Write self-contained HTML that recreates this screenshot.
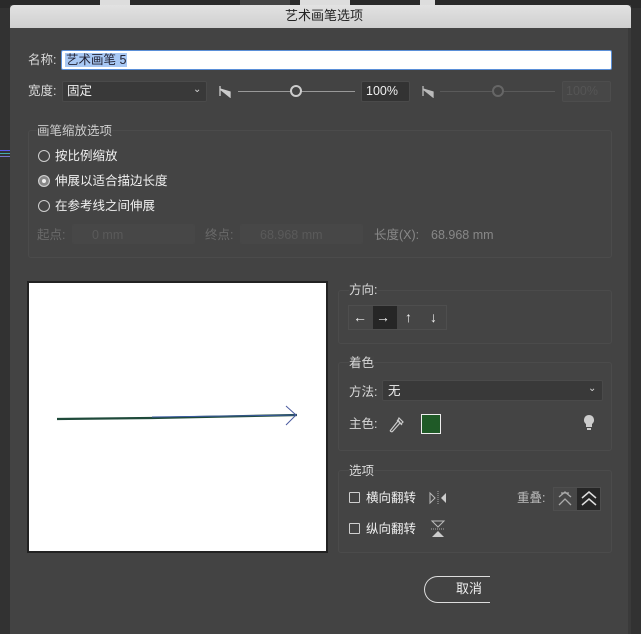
<!DOCTYPE html>
<html><head><meta charset="utf-8"><style>
*{margin:0;padding:0;box-sizing:border-box}
body{width:641px;height:634px;background:#323232;position:relative;overflow:hidden;font-family:"Liberation Sans","Noto Sans CJK SC",sans-serif;font-size:12.5px;color:#d8d8d8}
.a{position:absolute}
.t{position:absolute;white-space:nowrap;line-height:14px}
.g{position:absolute;border:1px solid #4b4b4b;border-radius:3px;background:#444}
.dis{color:#6a6a6a}
.inp{position:absolute;background:#393939;border:1px solid #4a4a4a;border-radius:2px}
.rad{position:absolute;width:12px;height:12px;border:1px solid #cfcfcf;border-radius:50%}
.cb{position:absolute;width:11px;height:11px;border:1px solid #cfcfcf;border-radius:1px}
.w{color:#f0f0f0}
</style></head><body>
<div class="a" style="left:0;top:0;width:641px;height:8px;background:#2a2a2a"></div>
<div class="a" style="left:100px;top:0;width:30px;height:5px;background:#ddd"></div>
<div class="a" style="left:240px;top:0;width:50px;height:5px;background:#444"></div>
<div class="a" style="left:300px;top:0;width:50px;height:5px;background:#ddd"></div>
<div class="a" style="left:420px;top:0;width:15px;height:5px;background:#ddd"></div>
<div class="a" style="left:10px;top:5px;width:621px;height:629px;background:#434343"></div>
<div class="a" style="left:10px;top:5px;width:621px;height:23px;background:linear-gradient(#e2e2e2,#cfcfcf);border-radius:4px 4px 0 0"></div>
<div class="t" style="left:285px;top:9px;color:#222;font-size:13px">艺术画笔选项</div>
<div class="a" style="left:628px;top:28px;width:3px;height:606px;background:#3a3a3a"></div>

<div class="t" style="left:28px;top:53px">名称:</div>
<div class="a" style="left:61px;top:50px;width:551px;height:20px;background:#fff;border:1px solid #5a8fd8;border-radius:2px"></div>
<div class="t" style="left:65px;top:53px;background:#a8c8f4;color:#223;padding:0 1px">艺术画笔 5</div>

<div class="t" style="left:28px;top:84px">宽度:</div>
<div class="inp" style="left:62px;top:81px;width:145px;height:21px"></div>
<div class="t w" style="left:67px;top:84px">固定</div>
<div class="t" style="left:193px;top:83px;font-size:10px">⌄</div>
<svg class="a" style="left:218px;top:84px" width="16" height="14"><path d="M2 2 L2 12 M2 5 L12 13 L12 8 Z" stroke="#ccc" fill="#ccc" stroke-width="1.3"/></svg>
<div class="a" style="left:238px;top:91px;width:117px;height:1px;background:#999"></div>
<div class="a" style="left:290px;top:85px;width:12px;height:12px;border:2px solid #ccc;border-radius:50%;background:#434343"></div>
<div class="inp" style="left:361px;top:81px;width:49px;height:21px;background:#333"></div>
<div class="t w" style="left:366px;top:84px">100%</div>
<svg class="a" style="left:421px;top:84px" width="16" height="14"><path d="M2 2 L2 12 M2 5 L12 13 L12 8 Z" stroke="#bbb" fill="#bbb" stroke-width="1.3"/></svg>
<div class="a" style="left:440px;top:91px;width:115px;height:1px;background:#5a5a5a"></div>
<div class="a" style="left:492px;top:85px;width:12px;height:12px;border:2px solid #666;border-radius:50%;background:#434343"></div>
<div class="inp" style="left:562px;top:81px;width:49px;height:21px;background:#474747;border-color:#4d4d4d"></div>
<div class="t dis" style="left:566px;top:84px;color:#555">100%</div>

<div class="g" style="left:28px;top:130px;width:584px;height:128px"></div>
<div class="t" style="left:37px;top:124px;background:#444;color:#ccc">画笔缩放选项</div>
<div class="a" style="left:0;top:150px;width:10px;height:1px;background:#5a5af0"></div>
<div class="a" style="left:0;top:153px;width:10px;height:1px;background:#4aa"></div>
<div class="a" style="left:0;top:156px;width:10px;height:1px;background:#77c"></div>
<div class="rad" style="left:38px;top:150px"></div><div class="t w" style="left:55px;top:149px">按比例缩放</div>
<div class="rad" style="left:38px;top:175px;background:#eee;box-shadow:inset 0 0 0 3px #888"></div><div class="t w" style="left:55px;top:174px">伸展以适合描边长度</div>
<div class="rad" style="left:38px;top:200px"></div><div class="t w" style="left:55px;top:199px">在参考线之间伸展</div>
<div class="t dis" style="left:37px;top:228px">起点:</div>
<div class="inp" style="left:72px;top:224px;width:123px;height:20px;background:#474747;border-color:#474747"></div>
<div class="t" style="left:92px;top:228px;color:#5a5a5a">0 mm</div>
<div class="t dis" style="left:205px;top:228px">终点:</div>
<div class="inp" style="left:240px;top:224px;width:123px;height:20px;background:#474747;border-color:#474747"></div>
<div class="t" style="left:260px;top:228px;color:#5a5a5a">68.968 mm</div>
<div class="t" style="left:374px;top:228px;color:#888">长度(X):</div>
<div class="t" style="left:431px;top:228px;color:#888">68.968 mm</div>

<div class="a" style="left:27px;top:281px;width:301px;height:272px;background:#fff;border:2px solid #222"></div>
<svg class="a" style="left:27px;top:281px" width="301" height="272"><path d="M30 138 L125 137 L270 134" stroke="#1f4a3a" stroke-width="2.2" fill="none"/><path d="M125 136 L270 134" stroke="#3a5aa0" stroke-width="1" fill="none"/><path d="M259 125 L269 134 L259 144" stroke="#4a5aa0" stroke-width="1" fill="none"/></svg>

<div class="g" style="left:338px;top:290px;width:274px;height:54px"></div>
<div class="t" style="left:349px;top:283px;background:#444">方向:</div>
<div class="a" style="left:348px;top:305px;width:99px;height:25px;border:1px solid #4e4e4e;background:#454545"></div>
<div class="a" style="left:373px;top:306px;width:24px;height:23px;background:#262626"></div>
<div class="t w" style="left:353px;top:310px;font-size:14px">←</div>
<div class="t w" style="left:376px;top:310px;font-size:14px">→</div>
<div class="t w" style="left:405px;top:310px;font-size:14px">↑</div>
<div class="t w" style="left:430px;top:310px;font-size:14px">↓</div>

<div class="g" style="left:338px;top:362px;width:274px;height:89px"></div>
<div class="t" style="left:349px;top:356px;background:#444">着色</div>
<div class="t" style="left:349px;top:385px">方法:</div>
<div class="inp" style="left:382px;top:380px;width:221px;height:21px"></div>
<div class="t w" style="left:388px;top:384px">无</div>
<div class="t" style="left:588px;top:382px;font-size:10px">⌄</div>
<div class="t" style="left:349px;top:417px">主色:</div>
<svg class="a" style="left:387px;top:414px" width="18" height="20"><path d="M3 17 L11 7 M5 18 L13 9 M3 17 L5 18 M10 6 L15 11 M12 4 L16 8 L14 10 L11 6 Z" stroke="#ccc" fill="none" stroke-width="1.2"/></svg>
<div class="a" style="left:421px;top:414px;width:20px;height:20px;background:#1f5a27;border:1px solid #eee"></div>
<svg class="a" style="left:582px;top:414px" width="14" height="18"><path d="M7 1 A5 5 0 0 1 10 10 L10 13 L4 13 L4 10 A5 5 0 0 1 7 1 Z" fill="#ccc"/><rect x="5" y="14" width="4" height="2" fill="#ccc"/></svg>

<div class="g" style="left:338px;top:470px;width:274px;height:83px"></div>
<div class="t" style="left:349px;top:464px;background:#444">选项</div>
<div class="cb" style="left:349px;top:492px"></div><div class="t w" style="left:366px;top:491px">横向翻转</div>
<svg class="a" style="left:428px;top:490px" width="20" height="16"><path d="M2 3 L7 8 L2 13 Z" stroke="#bbb" fill="none"/><path d="M18 3 L13 8 L18 13 Z" fill="#ccc"/><path d="M10 1 V15" stroke="#aaa" stroke-dasharray="1 1"/></svg>
<div class="cb" style="left:349px;top:523px"></div><div class="t w" style="left:366px;top:522px">纵向翻转</div>
<svg class="a" style="left:430px;top:519px" width="16" height="20"><path d="M2 2 H14 L8 8 Z" stroke="#bbb" fill="none"/><path d="M2 18 H14 L8 12 Z" fill="#ccc"/><path d="M1 10 H15" stroke="#aaa" stroke-dasharray="1 1"/></svg>
<div class="t" style="left:517px;top:491px;color:#bbb">重叠:</div>
<div class="a" style="left:553px;top:487px;width:48px;height:24px;border:1px solid #4e4e4e;background:#474747"></div>
<div class="a" style="left:577px;top:488px;width:23px;height:22px;background:#262626"></div>
<svg class="a" style="left:555px;top:489px" width="46" height="20"><path d="M4 8 L10 3 L16 8 M4 16 L10 10 L16 16 M6 4 H14" stroke="#aaa" fill="none" stroke-width="1.3"/><path d="M27 9 L34 3 L41 9 M27 16 L34 10 L41 16" stroke="#ddd" fill="none" stroke-width="1.5"/></svg>

<div class="a" style="left:424px;top:576px;width:66px;height:27px;border:1px solid #ddd;border-right:none;border-radius:14px 0 0 14px"></div>
<div class="t w" style="left:456px;top:582px;font-size:13px">取消</div>
</body></html>
